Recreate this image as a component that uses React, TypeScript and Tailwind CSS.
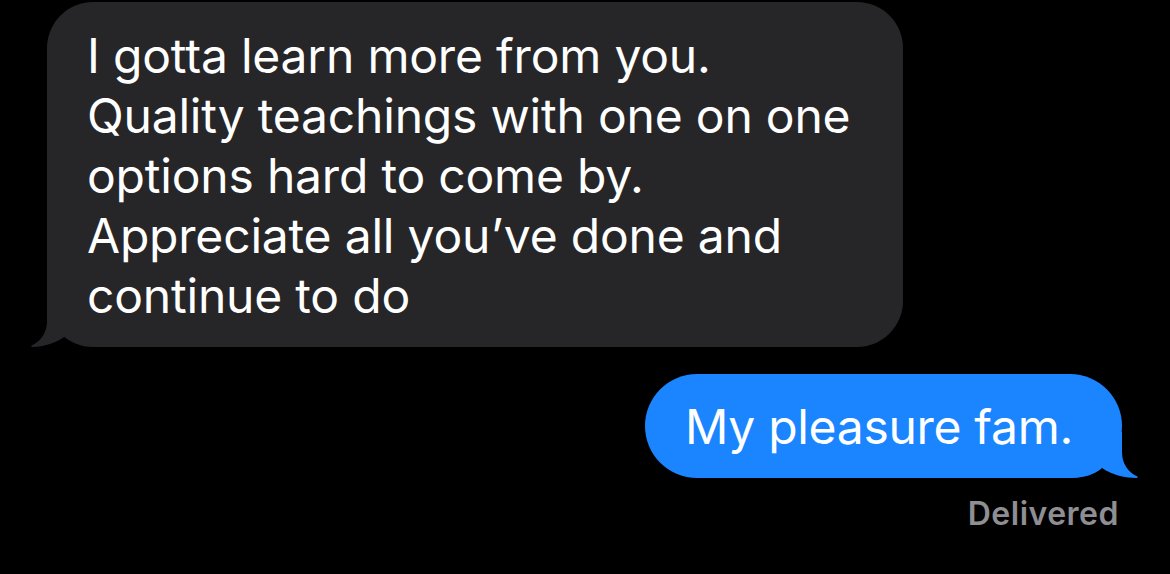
import type { ReactNode } from "react";

const lines = [
    "I gotta learn more from you.",
    "Quality teachings with one on one",
    "options hard to come by.",
    "Appreciate all you\u2019ve done and",
    "continue to do",
];

function TailLeft({ color }: { color: string }) {
    return (
        <svg className="absolute bottom-0 left-[-16px]" width="72" height="50" viewBox="0 0 72 50" fill={color}>
            <path d="M16 4 L16 24 C16 36 10 44 0.5 48.6 C0 49 0.3 50 1.5 50 C12 50 26 46 36 38 C44 46 54 50 72 50 L72 4 Z" />
        </svg>
    );
}

function TailRight({ color }: { color: string }) {
    return (
        <svg className="absolute right-[-16px] bottom-0" width="72" height="50" viewBox="0 0 72 50" fill={color}>
            <path d="M56 4 L56 24 C56 36 62 44 71.5 48.6 C72 49 71.7 50 70.5 50 C60 50 46 47 36 40 C28 47 18 50 0 50 L0 4 Z" />
        </svg>
    );
}

function Bubble({ side, children, className }: { side: "in" | "out"; children: ReactNode; className: string }) {
    const color = side === "in" ? "#262628" : "#1a85ff";
    return (
        <div className={className}>
            {side === "in" ? <TailLeft color={color} /> : <TailRight color={color} />}
            <div className="relative">{children}</div>
        </div>
    );
}

export default function App() {
    return (
        <div className="flex min-h-[574px] w-full flex-col bg-black font-['Inter','Liberation_Sans',sans-serif] text-white">
            <Bubble side="in" className="relative mt-[2px] ml-[47px] w-[856px] rounded-[46px] bg-[#262628] pt-[24px] pr-[20px] pb-[21px] pl-[40px]">
                {lines.map((line) => (
                    <div key={line} className="text-[48px] leading-[60px] tracking-[-0.2px] whitespace-nowrap">
                        {line}
                    </div>
                ))}
            </Bubble>

            <Bubble side="out" className="relative mt-[27px] mr-[48px] w-[477px] self-end rounded-[52px] bg-[#1a85ff] pt-[23px] pb-[21px] pl-[40px]">
                <div className="text-[48px] leading-[60px] tracking-[-0.3px] whitespace-nowrap">My pleasure fam.</div>
            </Bubble>

            <div className="mt-[18px] mr-[51px] self-end text-[32px] leading-[36px] font-semibold tracking-[0.5px] text-[#8e8e93]">Delivered</div>
        </div>
    );
}
